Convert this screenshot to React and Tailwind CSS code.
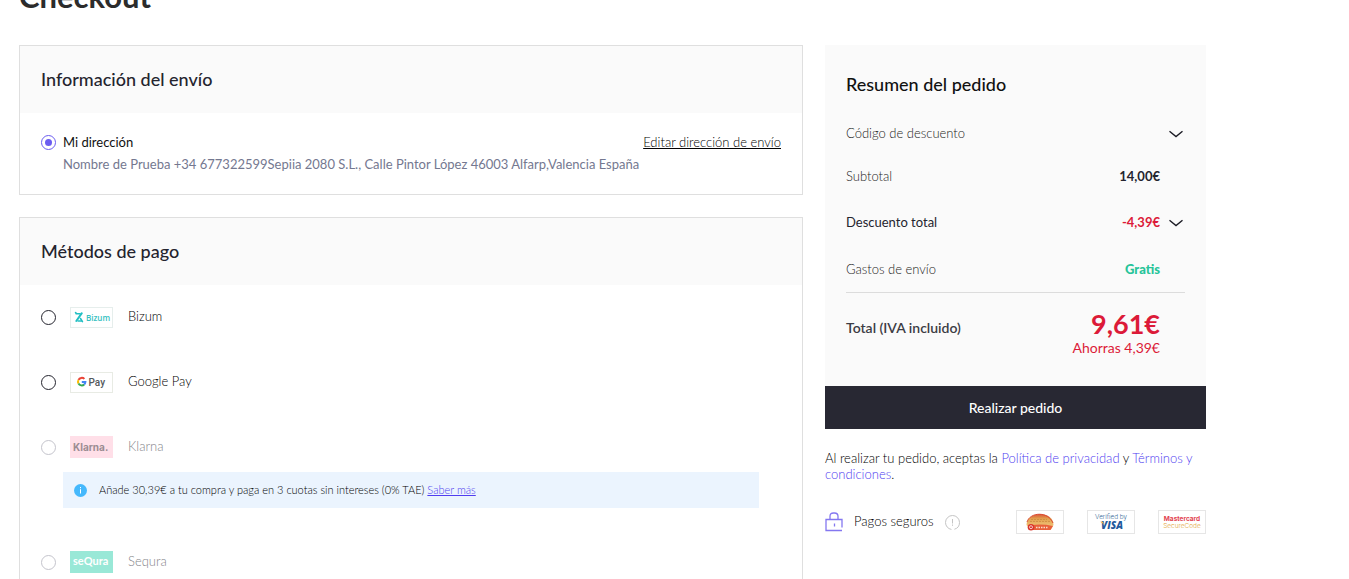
import { useState } from "react";
import clsx from "clsx";

function BizumLogo() {
  return (
    <svg viewBox="0 0 43 21" className="h-[21px] w-[43px]" aria-hidden="true">
      <rect x="0.5" y="0.5" width="42" height="20" fill="#fff" stroke="#e6eeec" />
      <g stroke="#22bfc3" strokeLinecap="round" fill="none">
        <path d="M6 6.800h4M8 14h3.500" strokeWidth="1.4" />
        <path d="M11.800 6.200L6.300 14" strokeWidth="2" />
        <path d="M5.500 5.500l.8.800M10.500 11.500l2 3.200" strokeWidth="1.5" />
      </g>
      <text x="16" y="14" fontSize="8" fontWeight="600" fill="#35bfc1" fontFamily="Open Sans, sans-serif">
        Bizum
      </text>
    </svg>
  );
}

function GooglePayLogo() {
  return (
    <svg viewBox="0 0 43 21" className="h-[21px] w-[43px]" aria-hidden="true">
      <rect x="0.5" y="0.5" width="42" height="20" fill="#fff" stroke="#e8ebe4" />
      <g fill="none" strokeWidth="2">
        <path d="M14.4 6.9A3.7 3.7 0 0 0 8.5 7.9" stroke="#ea4335" />
        <path d="M8.5 7.9a3.7 3.7 0 0 0 0 3.6" stroke="#fbbc04" />
        <path d="M8.5 11.5a3.7 3.7 0 0 0 5.7 1" stroke="#34a853" />
        <path d="M14.2 12.5a3.7 3.7 0 0 0 1.2-2.5h-3.6" stroke="#4285f4" />
      </g>
      <text x="18.500" y="14" fontSize="10" fontWeight="500" fill="#54585c" fontFamily="Roboto, sans-serif">
        Pay
      </text>
    </svg>
  );
}

function KlarnaLogo() {
  return (
    <svg viewBox="0 0 43 22" className="h-[22px] w-[43px]" aria-hidden="true">
      <rect width="43" height="22" fill="#ffdfe8" />
      <text x="3" y="15" fontSize="10" fontWeight="700" fill="#9b8c92" fontFamily="Inter, sans-serif">
        Klarna.
      </text>
    </svg>
  );
}

function SequraLogo() {
  return (
    <svg viewBox="0 0 43 22" className="h-[22px] w-[43px]" aria-hidden="true">
      <rect width="43" height="22" fill="#99e8d7" />
      <text x="3" y="14" fontSize="11" fontWeight="700" fill="#fff" fontFamily="Lato, sans-serif">
        seQura
      </text>
    </svg>
  );
}

function ChevronIcon() {
  return (
    <svg viewBox="0 0 14 8" className="mt-0.5 h-2 w-3.5" fill="none" stroke="#1b1b24" strokeWidth="1.4" aria-hidden="true">
      <path d="M0.500 1.300l6.500 5.200L13.500 1.300" />
    </svg>
  );
}

function LockIcon() {
  return (
    <svg viewBox="0 0 18 20" className="h-5 w-[18px]" fill="none" stroke="#8477f0" strokeWidth="1.3" aria-hidden="true">
      <path d="M17 15.500V7.500H1v11h16" />
      <path d="M5 7.500V4.200Q5 1 8.500 1h1Q13 1 13 4.200V7.500M9.500 11.500v3" />
    </svg>
  );
}

function AmexBadge() {
  return (
    <svg viewBox="0 0 48 24" className="h-6 w-12" role="img" aria-label="American Express SafeKey">
      <defs>
        <linearGradient id="amexGold" x1="0" y1="0" x2="0" y2="1">
          <stop offset="0" stopColor="#d8573a" />
          <stop offset="0.3" stopColor="#e2a04d" />
          <stop offset="1" stopColor="#f5d48c" />
        </linearGradient>
      </defs>
      <rect x="0.5" y="0.5" width="47" height="23" fill="#fff" stroke="#e6e6e6" />
      <path d="M10.500 15C11 1 37 0 37.500 15L35 19.500H14Z" fill="url(#amexGold)" />
      <path d="M11 12C14 2 32 1 37 13" fill="none" stroke="#dc4b34" />
      <path d="M15 9.500h16M14 11.500h20" stroke="#c9873f" strokeWidth="0.700" strokeDasharray="2 1" />
      <path d="M14 15.500Q25 13.500 37 16l-2.500 4H14Z" fill="#e8603a" />
      <circle cx="15" cy="17.200" r="3.300" fill="#d9352b" />
      <circle cx="15" cy="17.200" r="1.500" fill="none" stroke="#fff" strokeWidth="0.700" />
      <path d="M20 17.500h12" stroke="#fbdccb" strokeWidth="1.300" strokeDasharray="1.500 1" />
    </svg>
  );
}

function VisaBadge() {
  return (
    <svg viewBox="0 0 48 24" className="h-6 w-12" aria-hidden="true">
      <rect x="0.5" y="0.5" width="47" height="23" fill="#fff" stroke="#e6e6e6" />
      <text x="24" y="9" textAnchor="middle" fontSize="7" fill="#2c5f93" fontFamily="Roboto, sans-serif">
        Verified by
      </text>
      <text x="25" y="19" textAnchor="middle" fontSize="10" fontWeight="800" fontStyle="italic" fill="#1f5a9c" fontFamily="Open Sans, sans-serif">
        VISA
      </text>
      <path d="M13 11.700h3l1 3.500Q15.500 12.500 13 11.700Z" fill="#eeb03f" />
    </svg>
  );
}

function MastercardBadge() {
  return (
    <svg viewBox="0 0 48 24" className="h-6 w-12" aria-hidden="true">
      <rect x="0.5" y="0.5" width="47" height="23" fill="#fff" stroke="#e6e6e6" />
      <text x="24" y="11" textAnchor="middle" fontSize="6.500" fontWeight="700" fill="#e23f50" fontFamily="Inter, sans-serif">
        Mastercard
      </text>
      <text x="24" y="18" textAnchor="middle" fontSize="6.500" fill="#e3a83c" fontFamily="Inter, sans-serif">
        SecureCode
      </text>
    </svg>
  );
}

const paymentMethods = [
  { id: "bizum", label: "Bizum", Logo: BizumLogo },
  { id: "google-pay", label: "Google Pay", Logo: GooglePayLogo },
  {
    id: "klarna",
    label: "Klarna",
    Logo: KlarnaLogo,
    disabled: true,
    notice: "Añade 30,39€ a tu compra y paga en 3 cuotas sin intereses (0% TAE)",
  },
  { id: "sequra", label: "Sequra", Logo: SequraLogo, disabled: true },
];

function Card({ title, children }) {
  return (
    <section className="border border-[#dfdfdf] bg-white">
      <h2 className="bg-[#fafafa] px-[21px] py-5 text-lg leading-[27px] font-medium text-[#24242e]">
        {title}
      </h2>
      {children}
    </section>
  );
}

function Radio({ className, ...props }) {
  return (
    <input
      type="radio"
      className={clsx(
        "size-[15px] shrink-0 appearance-none rounded-full border border-[#24242e] bg-white p-[3px] checked:border-[#6b5cf0] checked:bg-[#6b5cf0] checked:bg-clip-content disabled:border-[#c4c4cc]",
        className,
      )}
      {...props}
    />
  );
}

function PaymentMethods() {
  const [method, setMethod] = useState("");

  return (
    <ul>
      {paymentMethods.map(({ id, label, Logo, disabled, notice }) => (
        <li key={id} className="px-[21px] pt-[21px] pb-[22px]">
          <label className="flex h-[22px] items-center">
            <Radio
              name="payment"
              value={id}
              disabled={disabled}
              checked={method === id}
              onChange={() => setMethod(id)}
            />
            <span className="ml-3.5 mr-[15px]">
              <Logo />
            </span>
            <span className={disabled ? "text-[#85858a]" : "text-black"}>
              {label}
            </span>
          </label>
          {notice && (
            <div className="mt-3.5 mr-[22px] ml-[22px] flex min-h-9 items-center bg-[#ebf4fe] px-[11px] text-[11px] text-black">
              <svg viewBox="0 0 13 13" className="mr-3 size-[13px]" aria-hidden="true">
                <circle cx="6.5" cy="6.5" r="6.500" fill="#45b8fc" />
                <path d="M6.500 3v1.200M6.500 5.200v4.300" stroke="#fff" />
              </svg>
              <p>
                {notice}{" "}
                <a href="#klarna" className="text-[#4f3df0] underline">
                  Saber más
                </a>
              </p>
            </div>
          )}
        </li>
      ))}
    </ul>
  );
}

function SummaryRow({ label, children, expandable, className }) {
  return (
    <div className={clsx("flex items-center leading-5", className)}>
      <dt className="flex-1">{label}</dt>
      <dd className="flex items-center font-bold">
        {children}
        <span className="ml-[9px] flex w-4">
          {expandable && (
            <button type="button" aria-label={`Mostrar ${label}`}>
              <ChevronIcon />
            </button>
          )}
        </span>
      </dd>
    </div>
  );
}

function OrderSummary() {
  return (
    <aside>
      <div className="bg-[#fafafa] px-[21px] py-[26px]">
        <h2 className="text-lg leading-[27px] font-medium text-[#111]">
          Resumen del pedido
        </h2>
        <dl className="text-[#1c1c22]">
          <SummaryRow label="Código de descuento" expandable className="mt-[25px]" />
          <SummaryRow label="Subtotal" className="mt-[23px]">
            <span className="text-[#24242e]">14,00€</span>
          </SummaryRow>
          <SummaryRow label="Descuento total" expandable className="mt-[26px] font-normal text-[#24242e]">
            <span className="text-[#dc1a38]">-4,39€</span>
          </SummaryRow>
          <SummaryRow label="Gastos de envío" className="mt-[27px]">
            <span className="font-black text-[#27c499]">Gratis</span>
          </SummaryRow>
          <div className="mt-[13px] flex items-center border-t border-[#dcdcdc] pt-[15px] pr-[25px] pb-1">
            <dt className="flex-1 pb-2 text-sm font-semibold text-[#3c3c44]">
              Total (IVA incluido)
            </dt>
            <dd className="text-right text-sm text-[#dc1a38]">
              <strong className="block text-[27px] leading-8 font-bold">9,61€</strong>
              <span className="block leading-4 font-normal">Ahorras 4,39€</span>
            </dd>
          </div>
        </dl>
      </div>
      <button type="submit" className="h-[43px] w-full bg-[#282833] text-sm font-medium text-white">
        Realizar pedido
      </button>
      <p className="mt-[21px] text-[13px] leading-4 text-black">
        Al realizar tu pedido, aceptas la{" "}
        <a href="#privacidad" className="text-[#4f3df0]">
          Política de privacidad
        </a>{" "}
        y{" "}
        <a href="#terminos" className="text-[#4f3df0]">
          Términos y condiciones
        </a>
        .
      </p>
      <div className="mt-7 flex items-center">
        <LockIcon />
        <span className="ml-[11px] flex flex-1 items-center gap-[11px] text-black">
          Pagos seguros
          <svg viewBox="0 0 15 15" className="size-[15px]" fill="none" stroke="#c4c4c4" aria-hidden="true">
            <circle cx="7.500" cy="7.500" r="7" strokeDasharray="41 3" strokeDashoffset="-12" />
            <path d="M7.500 4v4.500M7.500 9.500v1.300" />
          </svg>
        </span>
        <div className="flex gap-[23px]">
          <AmexBadge />
          <VisaBadge />
          <MastercardBadge />
        </div>
      </div>
    </aside>
  );
}

export default function App() {
  return (
    <div className="h-screen overflow-hidden bg-white font-['Lato',sans-serif] text-[13px] font-light text-[#111]">
      <main className="-mt-5 max-w-[1225px] px-[19px]">
        <h1 className="text-[31px] leading-8 font-bold text-[#2c2c2c]">Checkout</h1>
        <div className="mt-[33px] grid grid-cols-[minmax(0,1fr)_381px] items-start gap-[22px]">
          <div className="flex flex-col gap-[22px]">
            <Card title="Información del envío">
              <div className="flex items-start px-[21px] pt-[18px] pb-[19px]">
                <Radio id="address" name="address" defaultChecked className="mt-1" />
                <div className="ml-[7px] flex-1 leading-[22px]">
                  <label htmlFor="address" className="block font-normal">
                    Mi dirección
                  </label>
                  <p className="font-normal text-[#747890]">
                    Nombre de Prueba +34 677322599Sepiia 2080 S.L., Calle Pintor López 46003 Alfarp,Valencia España
                  </p>
                </div>
                <a href="#direccion" className="leading-[22px] text-black underline">
                  Editar dirección de envío
                </a>
              </div>
            </Card>
            <Card title="Métodos de pago">
              <PaymentMethods />
            </Card>
          </div>
          <OrderSummary />
        </div>
      </main>
    </div>
  );
}
